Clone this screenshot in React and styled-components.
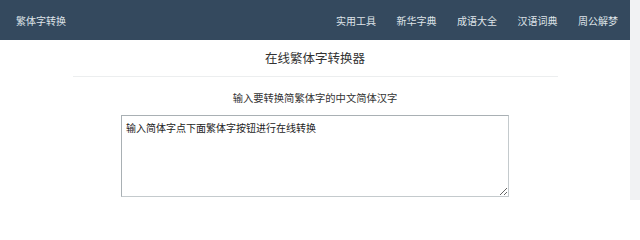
import React from 'react';
import styled, { createGlobalStyle } from 'styled-components';

const GlobalStyle = createGlobalStyle`
  html, body {
    margin: 0;
    padding: 0;
    background: #fff;
    overflow: hidden;
  }
  body {
    font-family: "Noto Sans CJK SC", "Noto Sans", sans-serif;
  }
`;

const navItems = ['实用工具', '新华字典', '成语大全', '汉语词典', '周公解梦'];

const App = () => {
  return (
    <SPage>
      <GlobalStyle />
      <SMain>
        <SNavbar>
          <SBrand>繁体字转换</SBrand>
          <SNavList>
            {navItems.map((item) => (
              <SNavLink key={item}>{item}</SNavLink>
            ))}
          </SNavList>
        </SNavbar>
        <SContent>
          <STitle>在线繁体字转换器</STitle>
          <SDivider />
          <SLabel>输入要转换简繁体字的中文简体汉字</SLabel>
          <STextArea defaultValue="输入简体字点下面繁体字按钮进行在线转换" />
        </SContent>
      </SMain>
      <SScrollTrack />
    </SPage>
  );
};

const SPage = styled.div`
  display: flex;
  flex-direction: row;
  width: 640px;
  height: 200px;
  overflow: hidden;
`;

const SMain = styled.div`
  flex: 1;
  display: flex;
  flex-direction: column;
`;

const SScrollTrack = styled.div`
  width: 10px;
  background-color: #f1f2f3;
`;

const SNavbar = styled.div`
  height: 40px;
  background-color: #34495e;
  display: flex;
  flex-direction: row;
  justify-content: space-between;
  align-items: center;
  padding: 0 12px 0 16px;
`;

const SBrand = styled.div`
  color: #dfe4e9;
  font-size: 10px;
`;

const SNavList = styled.div`
  display: flex;
  flex-direction: row;
  gap: 20.5px;
`;

const SNavLink = styled.a`
  color: #dfe4e9;
  font-size: 10px;
  text-decoration: none;
`;

const SContent = styled.div`
  display: flex;
  flex-direction: column;
  align-items: center;
`;

const STitle = styled.h1`
  margin: 0;
  height: 36px;
  line-height: 36px;
  font-size: 12.5px;
  font-weight: normal;
  color: #333;
`;

const SDivider = styled.hr`
  width: 485px;
  margin: 0;
  border: 0;
  border-top: 1px solid #eceeef;
`;

const SLabel = styled.p`
  margin: 12px 0 0 0;
  height: 18px;
  line-height: 18px;
  font-size: 10.3px;
  color: #333;
`;

const STextArea = styled.textarea`
  margin-top: 8px;
  width: 388px;
  height: 82px;
  box-sizing: border-box;
  padding: 5px 4px;
  border: 1px solid #a9b0b4;
  border-right-color: #c4cacd;
  border-bottom-color: #c4cacd;
  border-radius: 0;
  font-family: "Noto Sans CJK SC", sans-serif;
  font-size: 10px;
  line-height: 14px;
  color: #222;
  resize: vertical;
  outline: none;
`;

export default App;
